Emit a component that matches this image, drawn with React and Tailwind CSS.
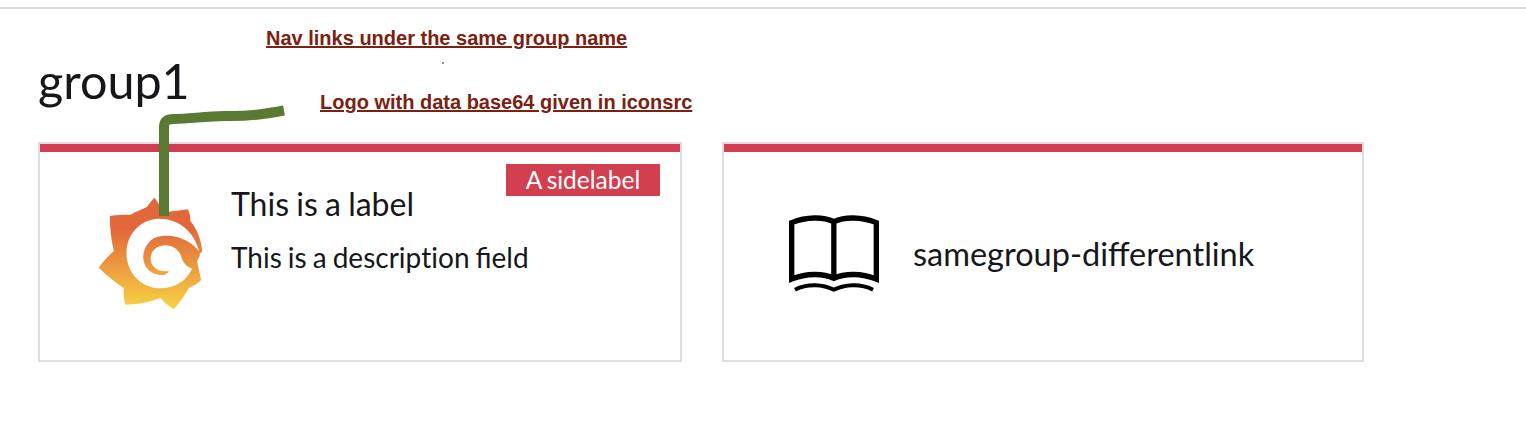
import React from "react";

function GrafanaLogo() {
  return (
    <svg className="w-[107px] h-[115px] shrink-0" viewBox="50 320 320 345">
      <defs>
        <linearGradient id="logoFill" gradientUnits="userSpaceOnUse" x1="0" y1="420" x2="0" y2="660">
          <stop offset="0" stopColor="#e2683c" />
          <stop offset="1" stopColor="#f8d442" />
        </linearGradient>
      </defs>
      <path
        fill="url(#logoFill)"
        d="M222 325 C232 338 240 352 246 368 C268 368 295 364 322 360 C328 372 330 384 330 396 C350 420 362 450 365 486 L347 505 C352 525 357 550 362 572 C350 585 338 590 325 596 C312 620 296 642 280 660 C266 652 252 640 240 626 C205 640 170 645 135 646 C130 630 128 612 130 596 C105 580 78 558 55 535 C66 518 82 500 100 486 C92 450 88 415 88 380 C108 376 130 376 150 376 C172 364 190 358 200 352 C206 342 214 332 222 325 Z"
      />
      {/* outer white turn of the spiral */}
      <path
        fill="#fff"
        d="M356 486 C340 425 295 388 235 388 C178 390 138 435 138 492 C138 552 185 597 238 597 C282 597 320 575 336 535 L345 505 Z"
      />
      {/* orange inner turn, joined to the gear on the right */}
      <path
        fill="url(#logoFill)"
        d="M358 500 L356 486 C338 462 298 436 245 440 C208 442 188 475 188 505 C190 535 212 557 245 557 C255 557 263 552 265 545 C250 548 230 545 218 530 C203 512 210 478 240 470 C272 462 298 480 304 508 C310 525 325 535 336 538 Z"
      />
    </svg>
  );
}

function BookIcon() {
  return (
    <svg className="w-[92px] h-[78px] shrink-0" viewBox="55 45 275 235" fill="none" stroke="#000">
      <path
        strokeWidth="16"
        d="M65 238 V68 C110 50 160 50 192 65 C225 50 275 50 320 68 V238 C275 220 225 220 192 236 C160 220 110 220 65 238 Z M192 65 V236"
      />
      <path strokeWidth="12" d="M75 270 C115 250 160 255 192 270 C225 255 270 250 310 270" />
    </svg>
  );
}

function Card({ children, width }) {
  return (
    <div className={`relative h-[220px] border-2 border-[#dcdee3] bg-white ${width}`}>
      <div className="h-2 bg-[#d13f50]" />
      {children}
    </div>
  );
}

export default function App() {
  return (
    <div className="relative w-[1526px] h-[432px] overflow-hidden bg-white font-['Lato','Open_Sans',sans-serif] text-[#16171b]">
      <div className="h-[9px] border-b-2 border-[#dcdee3] mb-[36px]" />
      <div className="pl-[38px]">
        <h2 className="text-[48.500px] leading-[70px] h-[97px]">group1</h2>
        <div className="flex gap-[40px]">
          <Card width="w-[644px]">
            <div className="flex items-start pl-[57px]">
              <div className="pt-[44px]">
                <GrafanaLogo />
              </div>
              <div className="pl-[27px] pt-[33px]">
                <div className="text-[32px] leading-[38px] [word-spacing:-0.03em]">This is a label</div>
                <div className="text-[28px] leading-[34px] mt-[17px] [word-spacing:-0.04em]">
                  This is a descrip<span className="[font-variant-ligatures:none]">t</span>ion field
                </div>
              </div>
            </div>
            <div className="absolute top-[20px] right-[20px] w-[154px] h-8 bg-[#d13f50] text-white text-[24.500px] leading-8 text-center [word-spacing:-0.05em]">
              A sidelabel
            </div>
          </Card>
          <Card width="w-[642px]">
            <div className="flex items-center h-[204px] pl-[64px] gap-[33px]">
              <BookIcon />
              <div className="text-[32.500px] leading-[38px]">samegroup-differentlink</div>
            </div>
          </Card>
        </div>
      </div>

      {/* annotations drawn on top of the screenshot */}
      <div className="absolute left-[266px] top-[26px] font-['Liberation_Sans',sans-serif] font-bold text-[20px] leading-6 text-[#7c2012] underline whitespace-nowrap">
        Nav links under the same group name
      </div>
      <div className="absolute left-[442px] top-[62px] w-[2px] h-[2px] bg-[#8a9a78]" />
      <div className="absolute left-[320px] top-[90px] font-['Liberation_Sans',sans-serif] font-bold text-[20px] leading-6 text-[#7c2012] underline whitespace-nowrap">
        Logo with data base64 given in iconsrc
      </div>
      <svg className="absolute left-[150px] top-[100px] w-[140px] h-[120px]" viewBox="150 100 140 120" fill="none">
        <path
          d="M164 216 V127 C164 121 167 119 174 119 C190 119 205 116 225 116 C250 116.500 265 114 284 110.500"
          stroke="#5a7a33"
          strokeWidth="10"
        />
      </svg>
    </div>
  );
}
